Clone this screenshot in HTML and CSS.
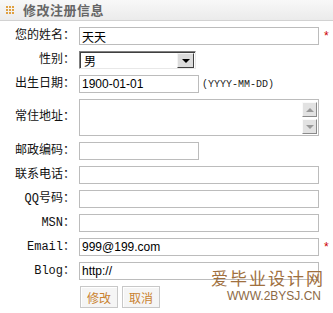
FILE: index.html
```html
<!DOCTYPE html>
<html lang="zh-CN">
<head>
  <meta charset="UTF-8">
  <title>修改注册信息</title>
  <link rel="stylesheet" href="styles.css">
</head>
<body>
  <!-- Panel title -->
  <div class="panel-head">
    <span class="head-icon"><i></i><i></i><i></i><i></i><i></i><i></i><i></i><i></i><i></i></span>
    <h1>修改注册信息</h1>
  </div>

  <form class="reg-form">
    <div class="row">
      <label>您的姓名：</label>
      <input class="txt wide" type="text" value="天天">
      <span class="req">*</span>
    </div>
    <div class="row">
      <label>性别：</label>
      <div class="fake-select">
        <span class="sel-value">男</span>
        <span class="sel-btn"><b></b></span>
      </div>
    </div>
    <div class="row">
      <label>出生日期：</label>
      <input class="txt short" type="text" value="1900-01-01">
      <span class="hint">(YYYY-MM-DD)</span>
    </div>
    <div class="row row-tall">
      <label>常住地址：</label>
      <div class="area-box">
        <textarea></textarea>
        <div class="scroll">
          <span class="scroll-btn up"><b></b></span>
          <span class="scroll-btn down"><b></b></span>
        </div>
      </div>
    </div>
    <div class="row">
      <label>邮政编码：</label>
      <input class="txt short" type="text">
    </div>
    <div class="row">
      <label>联系电话：</label>
      <input class="txt wide" type="text">
    </div>
    <div class="row">
      <label>QQ号码：</label>
      <input class="txt wide" type="text">
    </div>
    <div class="row">
      <label>MSN：</label>
      <input class="txt wide" type="text">
    </div>
    <div class="row">
      <label>Email：</label>
      <input class="txt wide" type="text" value="999@199.com">
      <span class="req">*</span>
    </div>
    <div class="row">
      <label>Blog：</label>
      <input class="txt wide" type="text" value="http://">
    </div>
    <div class="row actions">
      <button type="button" class="btn">修改</button>
      <button type="button" class="btn">取消</button>
    </div>
  </form>

  <!-- site watermark -->
  <div class="watermark">
    <div class="wm-cn">爱毕业设计网</div>
    <div class="wm-en">WWW.2BYSJ.CN</div>
  </div>
</body>
</html>
```

FILE: styles.css
```css
* {
  margin: 0;
  padding: 0;
  box-sizing: border-box;
}

body {
  font-family: "Noto Sans CJK SC", sans-serif;
  font-size: 12px;
  color: #000;
  background: #fff;
  position: relative;
  width: 333px;
  height: 313px;
  overflow: hidden;
}

/* Header */
.panel-head {
  height: 21px;
  display: flex;
  align-items: center;
  padding-left: 6px;
  background: linear-gradient(#f8f8f8, #ebebeb);
  border-bottom: 1px solid #d2d2d2;
}

.head-icon {
  display: grid;
  grid-template-columns: repeat(3, 2px);
  gap: 1px;
  margin-right: 9px;
}

.head-icon i {
  width: 2px;
  height: 2px;
  background: #e0a040;
}

.panel-head h1 {
  font-size: 13px;
  font-weight: bold;
  color: #666;
  letter-spacing: 0.5px;
  line-height: 20px;
}

/* Form rows */
.reg-form {
  padding-top: 6px;
}

.row {
  display: flex;
  align-items: center;
  height: 18px;
  margin-bottom: 6px;
}

.row label {
  width: 75px;
  margin-right: 4px;
  text-align: right;
  font-family: "Liberation Mono", "Noto Sans CJK SC", monospace;
  font-size: 12px;
  line-height: 18px;
  color: #111;
}

.txt {
  height: 18px;
  border: 1px solid #bcbcbc;
  padding: 0 2px;
  font-family: "Liberation Sans", Arial, sans-serif;
  font-size: 12px;
  color: #000;
  outline: none;
}

.txt.wide {
  width: 240px;
}

.txt.short {
  width: 120px;
}

.req {
  color: #c00;
  margin-left: 5px;
  font-family: "Liberation Sans", Arial, sans-serif;
  font-size: 12px;
}

.hint {
  margin-left: 3px;
  font-family: "Liberation Mono", monospace;
  font-size: 10px;
  color: #222;
}

/* Select look-alike */
.fake-select {
  width: 117px;
  height: 18px;
  display: flex;
  align-items: center;
  justify-content: space-between;
  border-top: 1px solid #808080;
  border-left: 1px solid #808080;
  border-right: 1px solid #e8e8e8;
  border-bottom: 1px solid #e8e8e8;
  box-shadow: inset 1px 1px 0 #404040;
  padding: 1px 1px 0 4px;
}

.sel-value {
  font-size: 12px;
  line-height: 14px;
}

.sel-btn {
  width: 17px;
  height: 15px;
  background: #dcdcdc;
  border-top: 1px solid #f4f4f4;
  border-left: 1px solid #f4f4f4;
  border-right: 1px solid #404040;
  border-bottom: 1px solid #404040;
  display: flex;
  align-items: center;
  justify-content: center;
}

.sel-btn b {
  width: 0;
  height: 0;
  border-left: 4px solid transparent;
  border-right: 4px solid transparent;
  border-top: 4px solid #000;
}

/* Textarea with classic scroll buttons */
.row-tall {
  height: 37px;
  margin-bottom: 6px;
  align-items: flex-start;
}

.row-tall label {
  line-height: 37px;
}

.area-box {
  width: 240px;
  height: 37px;
  border: 1px solid #bcbcbc;
  display: flex;
}

.area-box textarea {
  flex: 1;
  border: none;
  resize: none;
  outline: none;
  overflow: hidden;
}

.scroll {
  width: 16px;
  display: flex;
  flex-direction: column;
  gap: 2px;
  padding: 2px 1px 0 0;
}

.scroll-btn {
  height: 15px;
  background: #e2e2e2;
  border-top: 1px solid #fafafa;
  border-left: 1px solid #fafafa;
  border-right: 1px solid #8a8a8a;
  border-bottom: 1px solid #8a8a8a;
  display: flex;
  align-items: center;
  justify-content: center;
}

.scroll-btn b {
  width: 0;
  height: 0;
  border-left: 4px solid transparent;
  border-right: 4px solid transparent;
}

.scroll-btn.up b {
  border-bottom: 4px solid #999;
}

.scroll-btn.down b {
  border-top: 4px solid #999;
}

/* Buttons */
.actions {
  padding-left: 80px;
  height: 22px;
  gap: 4px;
}

.btn {
  width: 38px;
  height: 22px;
  background: #f5f5f5;
  border: 1px solid #c8c8c8;
  box-shadow: inset 1px 1px 0 #fff;
  color: #c9822f;
  font-family: "Noto Sans CJK SC", sans-serif;
  font-size: 12px;
  cursor: pointer;
}

/* Watermark over the form */
.watermark {
  position: absolute;
  left: 205px;
  top: 268px;
  text-align: right;
  width: 120px;
}

.wm-cn {
  font-family: "Noto Sans CJK SC", serif;
  font-size: 17px;
  line-height: 19px;
  letter-spacing: 2px;
  color: #a0703e;
}

.wm-en {
  margin-top: 3px;
  font-family: "Liberation Sans", Arial, sans-serif;
  font-size: 12px;
  line-height: 12px;
  color: #8c6a45;
  padding-right: 4px;
}
```
